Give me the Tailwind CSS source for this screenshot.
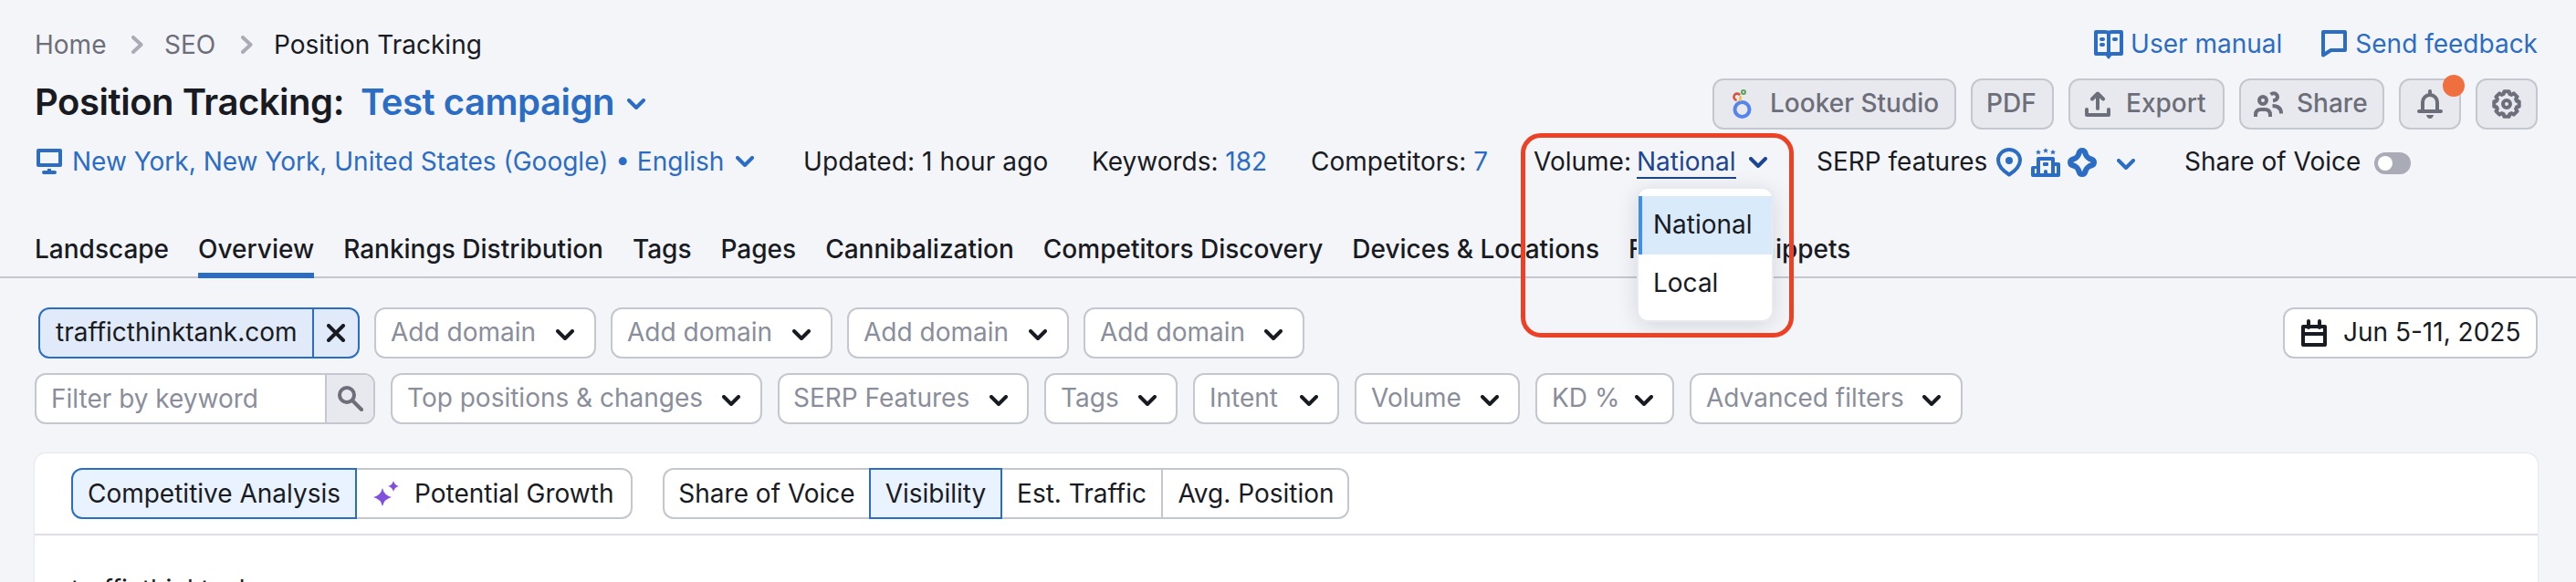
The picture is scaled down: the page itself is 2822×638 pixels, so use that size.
<!DOCTYPE html>
<html lang="en">

<head>
    <meta charset="UTF-8">
    <meta name="viewport" content="width=device-width, initial-scale=1.0">
    <title>Position Tracking: Test campaign</title>
    <script src="https://cdn.jsdelivr.net/npm/@tailwindcss/browser@4"></script>
</head>

<body class="h-[638px] overflow-hidden bg-[#f4f5f9] font-['Inter',sans-serif] text-[28px] leading-10 text-[#191b23] whitespace-nowrap">
    <!-- shared icons -->
    <svg class="hidden">
        <symbol id="chevron" viewBox="0 0 20 12">
            <path d="M2 2l8 8 8-8" fill="none" stroke="currentColor" stroke-width="4" stroke-linecap="round" stroke-linejoin="round" />
        </symbol>
        <symbol id="crumb" viewBox="0 0 13 20">
            <path d="M2 2c3 3 5.500 5 8.500 8-3 3-5.500 5-8.500 8" fill="none" stroke="currentColor" stroke-width="4" stroke-linecap="round" stroke-linejoin="round" />
        </symbol>
    </svg>

    <header class="px-[38px] pt-7 pr-[42px]">
        <!-- breadcrumbs -->
        <div class="flex h-10 justify-between">
            <nav class="mt-px flex text-[#6c6e79]">
                <a class="w-[106px]">Home</a>
                <span class="flex w-[36px] items-center text-[#a9abb6]"><svg class="h-5 w-[13px]"><use href="#crumb" /></svg></span>
                <a class="w-[84px]">SEO</a>
                <span class="flex w-[36px] items-center text-[#a9abb6]"><svg class="h-5 w-[13px]"><use href="#crumb" /></svg></span>
                <span class="text-[#191b23]">Position Tracking</span>
            </nav>
            <div class="flex gap-[43px] text-[#2b6cc4]">
                <a class="flex gap-2">
                    <svg class="mt-[5px] size-8" viewBox="0 0 32 32" fill="none" stroke="currentColor" stroke-width="4">
                        <path d="M2 2h10q4 0 4 2 0-2 4-2h10v24H2z" stroke-linejoin="round" />
                        <path d="M16 3v27" />
                        <path d="M12 27h8l-4 5z" fill="currentColor" stroke="none" />
                        <g fill="currentColor" stroke="none">
                            <rect x="6" y="8" width="6" height="4" rx="2" />
                            <rect x="6" y="14" width="6" height="4" rx="2" />
                            <rect x="20" y="8" width="6" height="4" rx="2" />
                        </g>
                    </svg>
                    <span>User manual</span>
                </a>
                <a class="flex gap-[9px]">
                    <svg class="mt-[5px] h-[30px] w-7" viewBox="0 0 28 30" fill="none" stroke="currentColor" stroke-width="4" stroke-linejoin="round">
                        <path d="M2 2h24v20H10.500L2 27.500z" />
                    </svg>
                    <span>Send feedback</span>
                </a>
            </div>
        </div>

        <!-- title and actions -->
        <div class="mt-[18px] flex h-14 items-center justify-between">
            <h1 class="flex items-center text-[40px] leading-[48px] font-semibold tracking-[-0.46px]">
                <span class="pb-1">Position Tracking:</span>
                <span class="ml-[18px] pb-1 text-[#2b6cc4]">Test campaign</span>
                <svg class="ml-[14px] h-3 w-5 text-[#2b6cc4]"><use href="#chevron" /></svg>
            </h1>
            <div class="flex gap-4 font-medium text-[#6c6e79]">
                <button class="flex h-14 w-[267px] items-center gap-[15px] rounded-xl border-2 border-[#c4c7cf] bg-[#e8e9ee] px-[14px]">
                    <svg class="size-8" viewBox="-7 0 32 32" fill="none">
                        <circle cx="9.500" cy="22" r="8" stroke="#5385ec" stroke-width="4" />
                        <path d="M3.600 11.800a3.600 3.600 0 1 1 3.400-5.600" stroke="#d85140" stroke-width="2.600" />
                        <path d="M7.500 7q.8 3-.8 6" stroke="#f1bf42" stroke-width="2.600" />
                        <circle cx="11" cy="3" r="2" stroke="#58a55c" stroke-width="2" />
                    </svg>
                    <span class="pb-0.5">Looker Studio</span>
                </button>
                <button class="flex h-14 w-[91px] items-center rounded-xl border-2 border-[#c4c7cf] bg-[#e8e9ee] px-[15px]">
                    <span class="pb-0.5">PDF</span>
                </button>
                <button class="flex h-14 w-[171px] items-center gap-[15px] rounded-xl border-2 border-[#c4c7cf] bg-[#e8e9ee] px-[14px]">
                    <svg class="size-8" viewBox="-2 -2 32 32" fill="none" stroke="currentColor" stroke-width="4" stroke-linecap="round" stroke-linejoin="round">
                        <path d="M14 19V3M8 8.500l6-6 6 6M2 20v6h24v-6" />
                    </svg>
                    <span class="pb-0.5">Export</span>
                </button>
                <button class="flex h-14 w-[159px] items-center gap-[15px] rounded-xl border-2 border-[#c4c7cf] bg-[#e8e9ee] px-[14px]">
                    <svg class="size-8" viewBox="0 -2 32 32" fill="none" stroke="currentColor" stroke-width="4">
                        <circle cx="10" cy="10" r="4" />
                        <path d="M2 28v-2q0-6 6-6h4q6 0 6 6v2" />
                        <path d="M18.500 3.500Q21 1.500 23.500 2.500 26 4 26 6.500 25.500 10 21 10.300M20.500 16q9.500 0 9.500 8.500" />
                    </svg>
                    <span class="pb-0.5">Share</span>
                </button>
                <button class="relative flex h-14 w-[68px] items-center justify-center rounded-xl border-2 border-[#c4c7cf] bg-[#e8e9ee]">
                    <svg class="h-8 w-7" viewBox="0 0 28 32" fill="none" stroke="currentColor" stroke-width="4" stroke-linecap="round">
                        <path d="M6 23v-9a8 8 0 0 1 16 0v9M2 24h24M14 2v3" />
                        <path d="M10 28h8q-1 4-4 4t-4-4z" fill="currentColor" stroke="none" />
                    </svg>
                    <span class="absolute -top-1.5 -right-1.5 size-6 rounded-full bg-[#ef6f3f]"></span>
                </button>
                <button class="flex h-14 w-[68px] items-center justify-center rounded-xl border-2 border-[#c4c7cf] bg-[#e8e9ee]">
                    <svg class="size-8" viewBox="0 0 32 32" fill="none" stroke="currentColor" stroke-width="4" stroke-linejoin="round">
                        <path d="M13.300 2.300L18.700 2.300 19.300 5 21.400 5.900 23.800 4.400 27.600 8.200 26.100 10.600 27 12.700 29.700 13.300 29.700 18.700 27 19.300 26.100 21.400 27.600 23.800 23.800 27.600 21.400 26.100 19.300 27 18.700 29.700 13.300 29.700 12.700 27 10.600 26.100 8.200 27.600 4.400 23.800 5.900 21.400 5 19.300 2.300 18.700 2.300 13.300 5 12.700 5.900 10.600 4.400 8.200 8.200 4.400 10.600 5.900 12.700 5z" />
                        <circle cx="16" cy="16" r="4" />
                    </svg>
                </button>
            </div>
        </div>

        <!-- campaign info -->
        <div class="mt-[15px] flex h-10">
            <a class="flex w-[842px] shrink-0 items-center text-[#2b6cc4]">
                <svg class="mr-[11px] ml-0.5 size-7" viewBox="0 0 28 28" fill="none" stroke="currentColor" stroke-width="4" stroke-linejoin="round">
                    <path d="M2 2h24v16H2zM14 22v4" />
                    <path d="M8 26h12" stroke-linecap="round" />
                </svg>
                New York, New York, United States (Google) • English
                <svg class="ml-[13px] h-3 w-5"><use href="#chevron" /></svg>
            </a>
            <div class="w-[316px] shrink-0 tracking-[0.1px]">Updated: 1 hour ago</div>
            <div class="w-[240px] shrink-0">Keywords: <a class="text-[#2b6cc4]">182</a></div>
            <div class="w-[244px] shrink-0">Competitors: <a class="text-[#2b6cc4]">7</a></div>
            <div class="relative flex w-[310px] shrink-0">
                <span class="w-[113px]">Volume:</span>
                <a class="h-[39px] border-b-2 border-[#1c4587] text-[#1c4691]">National</a>
                <svg class="mt-[15px] ml-[14px] h-3 w-5 text-[#1c4691]"><use href="#chevron" /></svg>
                <ul class="absolute top-[50px] left-[115px] z-10 h-36 w-[146px] rounded-[10px] bg-white pt-2 shadow-[0_0_0_2px_#e9eaf0,0_4px_24px_rgba(25,27,35,0.16)]">
                    <li class="h-16 border-l-4 border-[#3e8df0] bg-[#d9eafb] pt-[11px] pl-3">National</li>
                    <li class="h-16 pt-[11px] pl-4">Local</li>
                </ul>
                <div class="absolute -top-[11px] -left-[14px] z-20 h-56 w-[299px] rounded-[22px] border-5 border-[#ed4125]"></div>
            </div>
            <div class="flex w-[403px] shrink-0">
                <span class="w-[197px]">SERP features</span>
                <span class="mt-[5px] flex text-[#2b6cc4]">
                    <svg class="h-8 w-7" viewBox="0 0 28 32" fill="none" stroke="currentColor" stroke-width="4" stroke-linejoin="round">
                        <path d="M14 29.500C7 25 2 19.500 2 13.500a12 11.500 0 0 1 24 0c0 6-5 11.500-12 16z" />
                        <circle cx="14" cy="14" r="4" fill="currentColor" stroke="none" />
                    </svg>
                    <svg class="ml-[10px] size-8" viewBox="0 0 32 32" fill="currentColor">
                        <path d="M8 1.700l.9 2 2.100.2-1.600 1.400.5 2.200-1.900-1.200-1.900 1.200.5-2.200L5 3.900l2.100-.2zM16 0l.9 2 2.100.2-1.600 1.400.5 2.200-1.900-1.200-1.900 1.200.5-2.200L13 2.200l2.100-.2zM24 1.700l.9 2 2.100.2-1.600 1.400.5 2.200-1.900-1.200-1.900 1.200.5-2.200-1.600-1.400 2.100-.2z" />
                        <path fill-rule="evenodd" d="M8 10h16q2 0 2 2v4h4q2 0 2 2v12q0 2-2 2H2q-2 0-2-2V22q0-2 2-2h4v-8q0-2 2-2zM10 14v14h4v-2q0-2 2-2t2 2v2h4V14zM4 23v5h2v-5zM26 20v8h2v-8z" />
                        <rect x="13" y="16" width="6" height="4" rx="1" />
                    </svg>
                    <svg class="ml-2 size-8" viewBox="0 0 32 32" fill="currentColor">
                        <path fill-rule="evenodd" d="M16 0q5 0 6.500 5.500.8 3.500 4 4Q32 11 32 16t-5.500 6.500q-3.200.5-4 4Q21 32 16 32t-6.500-5.500q-.8-3.500-4-4Q0 21 0 16t5.500-6.500q3.200-.5 4-4Q11 0 16 0zM16 5.500q-2.300 8.200-10 10.500 7.700 2.300 10 10.500Q18.300 18.300 26 16 18.300 13.700 16 5.500z" />
                    </svg>
                    <svg class="mt-3 ml-[22px] h-3 w-5"><use href="#chevron" /></svg>
                </span>
            </div>
            <div class="flex items-center">
                <span class="w-[208px]">Share of Voice</span>
                <span class="mt-1 flex h-6 w-10 items-center rounded-full bg-[#a9abb6] px-1"><span class="size-4 rounded-full bg-white"></span></span>
            </div>
        </div>
    </header>

    <!-- tabs -->
    <nav class="mt-[56px] flex h-[52px] gap-8 border-b-2 border-[#c4c7cf] px-[38px] font-medium">
        <a>Landscape</a>
        <a class="h-[52px] border-b-6 border-[#2b6cc4]">Overview</a>
        <a>Rankings Distribution</a>
        <a>Tags</a>
        <a>Pages</a>
        <a>Cannibalization</a>
        <a>Competitors Discovery</a>
        <a>Devices &amp; Locations</a>
        <a>Featured Snippets</a>
    </nav>

    <!-- domains -->
    <div class="mt-8 flex gap-4 pr-[42px] pl-[42px] text-[#8a8e9b]">
        <div class="flex h-14 w-[352px] items-stretch rounded-xl border-2 border-[#2b6cc4] bg-[#e0eaf9] text-[#191b23]">
            <span class="w-[300px] border-r-2 border-[#2b6cc4] pt-[5px] pl-[17px]">trafficthinktank.com</span>
            <svg class="mt-4 ml-[14px] size-5" viewBox="0 0 20 20" fill="none" stroke="currentColor" stroke-width="4" stroke-linecap="round"><path d="M2 2l16 16M18 2L2 18" /></svg>
        </div>
        <button class="flex h-14 w-[243px] items-center justify-between rounded-xl border-2 border-[#c4c7cf] bg-white pr-[22px] pl-4">
            <span class="pb-[3px]">Add domain</span><svg class="mt-1 h-3 w-5 text-[#191b23]"><use href="#chevron" /></svg>
        </button>
        <button class="flex h-14 w-[243px] items-center justify-between rounded-xl border-2 border-[#c4c7cf] bg-white pr-[22px] pl-4">
            <span class="pb-[3px]">Add domain</span><svg class="mt-1 h-3 w-5 text-[#191b23]"><use href="#chevron" /></svg>
        </button>
        <button class="flex h-14 w-[243px] items-center justify-between rounded-xl border-2 border-[#c4c7cf] bg-white pr-[22px] pl-4">
            <span class="pb-[3px]">Add domain</span><svg class="mt-1 h-3 w-5 text-[#191b23]"><use href="#chevron" /></svg>
        </button>
        <button class="flex h-14 w-[242px] items-center justify-between rounded-xl border-2 border-[#c4c7cf] bg-white pr-[22px] pl-4">
            <span class="pb-[3px]">Add domain</span><svg class="mt-1 h-3 w-5 text-[#191b23]"><use href="#chevron" /></svg>
        </button>
        <button class="ml-auto flex h-14 w-[279px] items-center gap-[18px] rounded-xl border-2 border-[#c4c7cf] bg-white pl-[18px] text-[#191b23]">
            <svg class="h-[30px] w-7" viewBox="0 0 28 30" fill="none" stroke="currentColor" stroke-width="4">
                <path d="M2 8h24v20H2zM2 16h24" stroke-linejoin="round" />
                <path d="M8 2v7M20 2v7" stroke-linecap="round" />
            </svg>
            <span class="pb-[3px]">Jun 5-11, 2025</span>
        </button>
    </div>

    <!-- filters -->
    <div class="mt-4 flex gap-[17px] pl-[38px] text-[#8a8e9b]">
        <div class="flex h-14 w-[373px] overflow-hidden rounded-xl border-2 border-[#c4c7cf] bg-white">
            <span class="w-[318px] border-r-2 border-[#c4c7cf] pt-[6px] pl-4">Filter by keyword</span>
            <span class="flex grow items-center bg-[#e8e9ee] pl-3 text-[#6c6e79]">
                <svg class="size-7" viewBox="0 0 28 28" fill="none" stroke="currentColor" stroke-width="4" stroke-linecap="round"><circle cx="10" cy="10" r="8" /><path d="M16.500 16.500L26 26" /></svg>
            </span>
        </div>
        <button class="flex h-14 w-[407px] items-center justify-between rounded-xl border-2 border-[#c4c7cf] bg-white pr-[22px] pl-4">
            <span class="pb-[3px]">Top positions &amp; changes</span><svg class="mt-1 h-3 w-5 text-[#191b23]"><use href="#chevron" /></svg>
        </button>
        <button class="flex h-14 w-[275px] items-center justify-between rounded-xl border-2 border-[#c4c7cf] bg-white pr-[21px] pl-[15px]">
            <span class="pb-[3px]">SERP Features</span><svg class="mt-1 h-3 w-5 text-[#191b23]"><use href="#chevron" /></svg>
        </button>
        <button class="flex h-14 w-[146px] items-center justify-between rounded-xl border-2 border-[#c4c7cf] bg-white pr-[21px] pl-4">
            <span class="pb-[3px]">Tags</span><svg class="mt-1 h-3 w-5 text-[#191b23]"><use href="#chevron" /></svg>
        </button>
        <button class="flex h-14 w-[160px] items-center justify-between rounded-xl border-2 border-[#c4c7cf] bg-white pr-[21px] pl-4">
            <span class="pb-[3px]">Intent</span><svg class="mt-1 h-3 w-5 text-[#191b23]"><use href="#chevron" /></svg>
        </button>
        <button class="flex h-14 w-[181px] items-center justify-between rounded-xl border-2 border-[#c4c7cf] bg-white pr-[21px] pl-4">
            <span class="pb-[3px]">Volume</span><svg class="mt-1 h-3 w-5 text-[#191b23]"><use href="#chevron" /></svg>
        </button>
        <button class="flex h-14 w-[152px] items-center justify-between rounded-xl border-2 border-[#c4c7cf] bg-white pr-[21px] pl-4">
            <span class="pb-[3px]">KD %</span><svg class="mt-1 h-3 w-5 text-[#191b23]"><use href="#chevron" /></svg>
        </button>
        <button class="flex h-14 w-[299px] items-center justify-between rounded-xl border-2 border-[#c4c7cf] bg-white pr-[22px] pl-4">
            <span class="pb-[3px]">Advanced filters</span><svg class="mt-1 h-3 w-5 text-[#191b23]"><use href="#chevron" /></svg>
        </button>
    </div>

    <!-- overview card -->
    <main class="mt-8 mr-[42px] ml-[38px] h-[141px] overflow-hidden rounded-t-xl bg-white shadow-[0_0_2px_rgba(25,27,35,0.2)]">
        <div class="flex h-[90px] gap-[33px] border-b-2 border-[#dcdde5] pt-4 pl-10">
            <div class="flex h-14">
                <button class="w-[313px] rounded-l-xl border-2 border-[#2b6cc4] bg-[#e9f2ff]">Competitive Analysis</button>
                <button class="flex w-[302px] items-center gap-[17px] rounded-r-xl border-2 border-l-0 border-[#c4c7cf] pl-[18px]">
                    <svg class="size-7" viewBox="0 0 28 28" fill="#8150dc"><path d="M10 8q1.800 8 10 10-8.200 2-10 10Q8.200 20 0 18q8.200-2 10-10zM22 0q1.200 4.800 6 6-4.800 1.200-6 6-1.200-4.800-6-6 4.800-1.200 6-6z" /></svg>
                    Potential Growth
                </button>
            </div>
            <div class="flex h-14">
                <button class="w-[226px] rounded-l-xl border-2 border-r-0 border-[#c4c7cf]">Share of Voice</button>
                <button class="w-[146px] border-2 border-[#2b6cc4] bg-[#e9f2ff]">Visibility</button>
                <button class="w-[176px] border-2 border-l-0 border-[#c4c7cf]">Est. Traffic</button>
                <button class="w-[204px] rounded-r-xl border-2 border-l-0 border-[#c4c7cf] pl-0.5">Avg. Position</button>
            </div>
        </div>
        <div class="h-[51px] overflow-hidden pt-[39px] pl-10">trafficthinktank.com</div>
    </main>
</body>

</html>
